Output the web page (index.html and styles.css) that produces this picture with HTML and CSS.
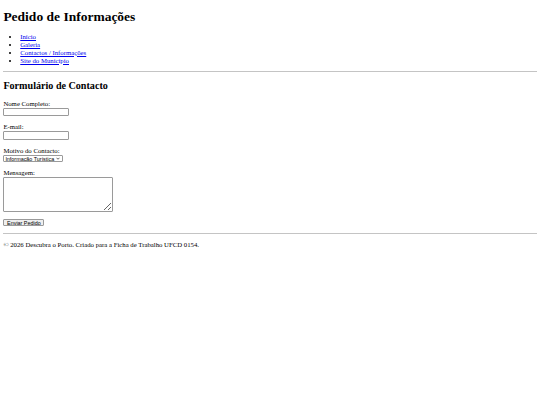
FILE: index.html
```html
<!DOCTYPE html>
<html lang="pt">
<head>
    <meta charset="UTF-8">
    <meta name="viewport" content="width=device-width, initial-scale=1.0">
    <title>Pedido de Informações</title>
    <link rel="stylesheet" href="styles.css">
</head>
<body>
    <header>
        <h1 class="page-title">Pedido de Informações</h1>
        <nav>
            <ul class="menu">
                <li><a href="index.html">Início</a></li>
                <li><a href="galeria.html">Galeria</a></li>
                <li><a href="contactos.html">Contactos / Informações</a></li>
                <li><a href="#">Site do Município</a></li>
            </ul>
        </nav>
    </header>
    <hr class="divider">
    <main>
        <h2 class="section-title">Formulário de Contacto</h2>
        <form class="contact-form">
            <p class="field">
                <label for="nome">Nome Completo:</label>
                <input class="text-input" type="text" id="nome" name="nome">
            </p>
            <p class="field">
                <label for="email">E-mail:</label>
                <input class="text-input" type="email" id="email" name="email">
            </p>
            <p class="field">
                <label for="motivo">Motivo do Contacto:</label>
                <select class="select-input" id="motivo" name="motivo">
                    <option>Informação Turística</option>
                    <option>Sugestão</option>
                    <option>Outro</option>
                </select>
            </p>
            <p class="field">
                <label for="mensagem">Mensagem:</label>
                <textarea class="message-input" id="mensagem" name="mensagem"></textarea>
            </p>
            <p class="field">
                <button class="submit-button" type="submit">Enviar Pedido</button>
            </p>
        </form>
    </main>
    <hr class="divider">
    <footer>
        <p class="field">&copy; 2026 Descubra o Porto. Criado para a Ficha de Trabalho UFCD 0154.</p>
    </footer>
</body>
</html>
```

FILE: styles.css
```css
html {
    background-color: white;
}
body {
    margin: 0;
    padding: 0 3.375px;
    font-family: "Liberation Serif", "Times New Roman", serif;
    font-size: 6.75px;
    line-height: 7.6px;
    color: black;
}
.page-title {
    font-size: 13.5px;
    line-height: 15.6px;
    margin: 8.7px 0 8.5px;
}
.menu {
    margin: 8.5px 0 5.75px;
    padding-left: 16.875px;
    line-height: 8px;
}
.menu a {
    color: #0000ee;
}
.divider {
    height: 0;
    border: 0;
    border-top: 1px solid #c4c4c4;
    margin: 3.375px 0;
}
.section-title {
    font-size: 10.125px;
    line-height: 11.4px;
    margin: 8.4px 0;
}
.field {
    margin: 7px 0;
}
.field label {
    display: block;
    line-height: 8px;
}
.text-input,
.select-input,
.message-input,
.submit-button {
    display: block;
    box-sizing: border-box;
    margin: 0;
    font-family: "Liberation Sans", Arial, sans-serif;
    font-size: 5.4px;
    line-height: 6px;
    color: black;
    border: 1px solid #9a9a9a;
    border-radius: 1px;
}
.text-input {
    width: 66px;
    height: 8.7px;
    padding: 0 1px;
}
.select-input {
    appearance: none;
    width: 60px;
    height: 7px;
    padding: 0 0 0 1px;
    background-color: white;
    background-image: url("data:image/svg+xml,%3Csvg xmlns='http://www.w3.org/2000/svg' width='8' height='6' viewBox='0 0 8 6'%3E%3Cpath d='M1 1.5 4 4.5 7 1.5' fill='none' stroke='%23222' stroke-width='1.4'/%3E%3C/svg%3E");
    background-repeat: no-repeat;
    background-position: right 2px center;
    background-size: 4px 3px;
}
.message-input {
    width: 110px;
    height: 34.8px;
    padding: 1px;
    margin-bottom: 2.5px;
}
.submit-button {
    width: 41px;
    height: 7.5px;
    padding: 0;
    margin: 1px 0;
    background-color: #efefef;
}
```
